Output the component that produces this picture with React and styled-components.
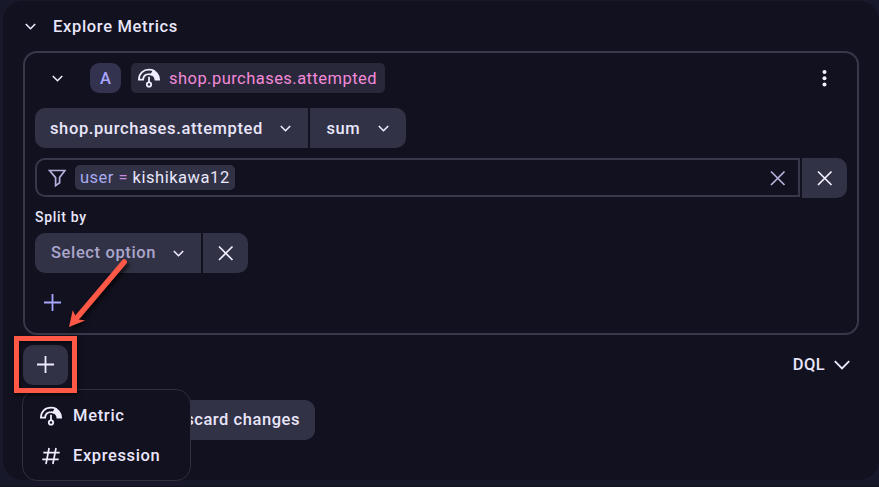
import React from "react";
import styled, { createGlobalStyle } from "styled-components";

const Global = createGlobalStyle`
  * { box-sizing: border-box; }
  html, body { margin: 0; background: #171829; overflow: hidden; }
  body { font-family: Roboto, "Noto Sans", sans-serif; font-weight: 500; font-size: 16.5px; line-height: 20px; color: #e9e6fb; }
  svg { display: block; flex: none; }
`;
const Page = styled.div`width: 879px; height: 487px; padding: 1px 0 0 3px; border-bottom: 1px solid #11111d;`;
const Panel = styled.main`position: relative; width: 876px; height: 479px; background: #12111f; border-radius: 20px; padding: 15px 20px 0;`;
const Header = styled.header`display: flex; align-items: center; height: 20px; padding-left: 2px; gap: 17px; margin-bottom: 15px;`;
const Label = styled.span`white-space: nowrap; letter-spacing: ${(p) => p.$ls ?? 0.6}px; padding-top: ${(p) => p.$drop || 0}px; font-weight: ${(p) => p.$weight || 500}; color: ${(p) => p.$color || "inherit"};`;
const Card = styled.section`width: 836px; height: 284px; border: 2px solid #3a374b; border-radius: 14px; padding: 10px;`;
const TitleRow = styled.div`display: flex; align-items: center; height: 30px; padding: 0 20px 0 17px; margin-bottom: 15px;`;
const Badge = styled.span`display: grid; place-items: center; width: 31px; height: 30px; margin: 0 10px 0 27px; border-radius: 9px; background: #33324f; color: #a9a6ff;`;
const MetricChip = styled.span`display: flex; align-items: center; gap: 9px; width: 254px; height: 30px; padding-left: 7px; border-radius: 5px; background: #29283b; margin-right: auto;`;
const Group = styled.div`display: flex; gap: 2px; margin-bottom: ${(p) => p.$mb || 0}px;`;
const Button = styled.button`
  display: flex; align-items: center; justify-content: ${(p) => (p.$icon ? "center" : p.$end ? "flex-end" : "space-between")};
  width: ${(p) => p.$w}px; height: 40px; padding: ${(p) => (p.$icon ? "0" : `0 ${p.$end ? 15 : 17}px 0 ${p.$pl || 15}px`)}; border: 0;
  border-radius: ${(p) => ({ left: "10px 0 0 10px", right: "0 10px 10px 0", all: "10px" })[p.$side]};
  background: #323246; color: inherit; font: inherit;
`;
const Filter = styled.div`display: flex; align-items: center; width: 765px; height: 39px; border: 2px solid #3a374b; border-radius: 10px 0 0 10px; padding: 0 12.5px 0 11px;`;
const Token = styled.span`display: flex; align-items: center; gap: 4.5px; width: 160px; height: 25px; padding-left: 5px; margin: 0 auto 0 9px; border-radius: 5px; background: #323246;`;
const Small = styled.div`font-size: 14px; line-height: 18px; letter-spacing: 0.7px; margin-bottom: 7px;`;
const PlainButton = styled.button`display: flex; border: 0; padding: 0; margin: 21px 0 0 9px; background: none;`;
const Actions = styled.div`display: flex; justify-content: space-between; align-items: center; height: 40px; margin: 10px 0 15px; padding-right: 9px;`;
const AddButton = styled(Button)`padding-bottom: 1px;`;
const Toggle = styled.div`display: flex; align-items: center; gap: 9px;`;
const Footer = styled.div`display: flex; justify-content: flex-end; width: 292px;`;
const Menu = styled.div`position: absolute; left: 19px; top: 388px; width: 169px; height: 92px; padding: 6px 16.5px; border: 1px solid #302e3f; border-radius: 15px; background: #12111f;`;
const MenuItem = styled.div`display: flex; align-items: center; gap: 11.5px; height: 40px;`;
const Highlight = styled.div`position: absolute; left: 11px; top: 335px; width: 63px; height: 57px; border: 5px solid #ff5847; box-shadow: 1px 2px 4px #000a, inset 1px 2px 4px #0008;`;
const ArrowLayer = styled.svg`position: absolute; left: 57px; top: 249px; filter: drop-shadow(2px 3px 2px #000a);`;

const Chevron = ({ big }) => big ? (
  <svg width="16" height="10" viewBox="0 0 16 10" fill="none" stroke="#efecff" strokeWidth="1.8"><path d="M.8 1.2 8 8.4l7.2-7.2" /></svg>
) : (
  <svg width="11" height="8" viewBox="0 0 11 8" fill="none" stroke="#efecff" strokeWidth="1.6"><path d="m.8 2 4.7 4.7 4.7-4.7" /></svg>
);
const Cross = ({ color = "#f2f0ff" }) => (
  <svg width="16" height="16" viewBox="0 0 16 16" stroke={color} strokeWidth="1.7"><path d="m1 1.5 13.5 13.5M14.5 1.5 1 15" /></svg>
);
const Plus = ({ color = "#efecff" }) => (
  <svg width="17" height="17" viewBox="0 0 17 17" stroke={color} strokeWidth="1.8"><path d="M8.5 0v17M0 8.5h17" /></svg>
);
const Gauge = () => (
  <svg width="22" height="20" viewBox="0 0 22 20" fill="none" stroke="#efecff">
    <path d="M.9 11.7C.9 5.4 5.3 1.7 11 1.7c2 0 3.7.4 5 1.1L13.6 6.6A6 6 0 0 0 11 6.1c-3.5 0-5.7 2.4-5.9 5.6Z" strokeWidth="1.8" />
    <path d="M14.8 1.8A11 11 0 0 1 22 12.5h-5.4a5.7 5.7 0 0 0-4.1-5.4Z" fill="#efecff" stroke="none" />
    <path d="M11 8.8v5.5" strokeWidth="1.8" /><circle cx="11" cy="16.5" r="2.2" strokeWidth="1.8" />
  </svg>
);
const Hash = () => (
  <svg width="22" height="18" viewBox="0 0 22 18" stroke="#efecff" strokeWidth="1.7"><path d="M9.1 1 6 17M16 1l-3.1 16M3.3 5.7h16.4M2.3 12.3h16.4" /></svg>
);
const Funnel = () => (
  <svg width="18" height="18" viewBox="0 0 18 18" fill="none" stroke="#b5b2dc" strokeWidth="1.7"><path d="M1.6 1.5h15.4L11.6 8.6v5.2l-4 2.8v-8Z" /></svg>
);
const Dots = () => (
  <svg width="5" height="18" viewBox="0 0 5 18" fill="#f2f0ff"><circle cx="2.5" cy="3" r="2" /><circle cx="2.5" cy="9.2" r="2" /><circle cx="2.5" cy="15.4" r="2" /></svg>
);

export default function App() {
  return (
    <Page>
      <Global />
      <Panel>
        <Header><Chevron /><Label $drop={2} $ls={0.67}>Explore Metrics</Label></Header>
        <Card>
          <TitleRow>
            <Chevron /><Badge><Label $drop={2} $ls={0}>A</Label></Badge>
            <MetricChip><Gauge /><Label $drop={2} $ls={0.46} $weight={400} $color="#f38ad8">shop.purchases.attempted</Label></MetricChip>
            <Dots />
          </TitleRow>
          <Group $mb={10}>
            <Button $w={273} $side="left"><Label $drop={2} $ls={0.62}>shop.purchases.attempted</Label><Chevron /></Button>
            <Button $w={96} $pl={16.5} $side="right"><Label $drop={2}>sum</Label><Chevron /></Button>
          </Group>
          <Group $mb={10}>
            <Filter>
              <Funnel />
              <Token><Label $weight={400} $ls={0.5} $color="#a9aaf0">user</Label><Label $weight={400} $ls={0.5} $color="#c78be0">=</Label><Label $weight={400} $ls={0.54}>kishikawa12</Label></Token>
              <Cross color="#b5b2dc" />
            </Filter>
            <Button $w={45} $side="right" $icon><Cross /></Button>
          </Group>
          <Small>Split by</Small>
          <Group>
            <Button $w={166} $pl={16} $side="left"><Label $color="#aaa6cc" $ls={0.62}>Select option</Label><Chevron /></Button>
            <Button $w={45} $side="right" $icon><Cross /></Button>
          </Group>
          <PlainButton><Plus color="#a9a6ff" /></PlainButton>
        </Card>
        <Actions>
          <AddButton $w={45} $side="all" $icon><Plus /></AddButton>
          <Toggle><Label $ls={0.4}>DQL</Label><Chevron big /></Toggle>
        </Actions>
        <Footer><Button $w={165} $side="all" $end><Label $ls={0.55}>Discard changes</Label></Button></Footer>
        <Menu>
          <MenuItem><Gauge /><Label $ls={0.7}>Metric</Label></MenuItem>
          <MenuItem><Hash /><Label $ls={0.62}>Expression</Label></MenuItem>
        </Menu>
        <Highlight />
        <ArrowLayer width="80" height="90" viewBox="60 250 80 90">
          <path d="M124.2 262 78 316.5" stroke="#ff5847" strokeWidth="5.5" strokeLinecap="round" />
          <path d="M69 327 72.7 310.3 75.5 316l3.5 3.5 6.2 1Z" fill="#ff5847" />
        </ArrowLayer>
      </Panel>
    </Page>
  );
}
